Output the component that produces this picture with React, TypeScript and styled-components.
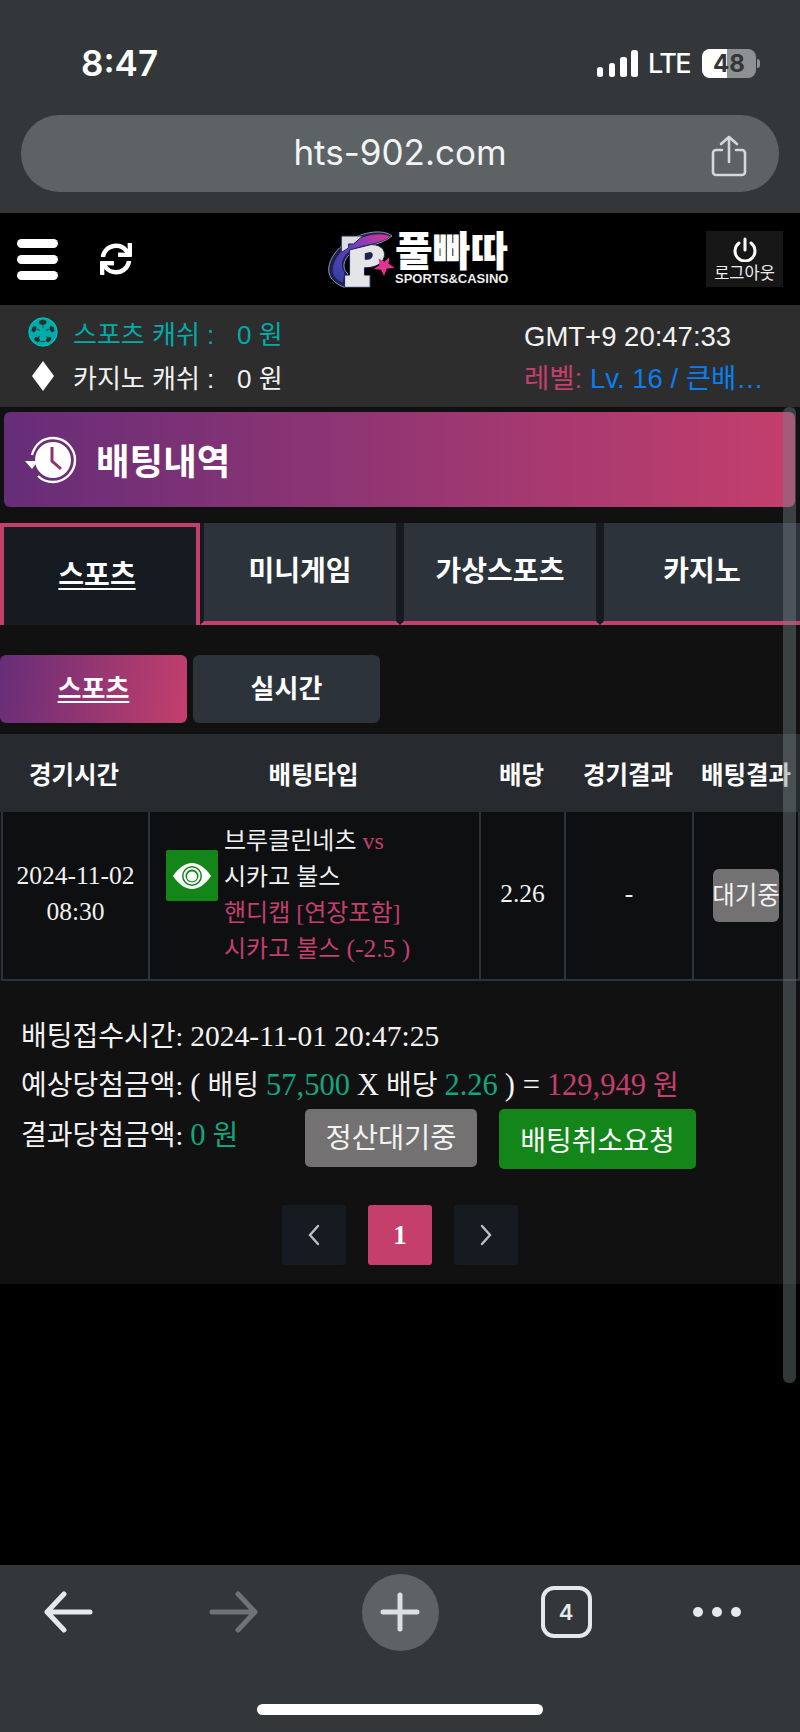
import React from 'react';
import styled, { createGlobalStyle } from 'styled-components';
import { FaSync } from 'react-icons/fa';

const SERIF = `"Liberation Serif", "Noto Sans CJK KR", serif`;
const SANS = `"Liberation Sans", "Noto Sans CJK KR", sans-serif`;
const PINK = '#c43f6c';
const GRAD = 'linear-gradient(90deg, #662d78, #c43f6c)';

const GlobalStyle = createGlobalStyle`
  html, body { margin: 0; padding: 0; background: #000; }
  * { box-sizing: border-box; }
`;

const App: React.FunctionComponent = () => (
  <Page>
    <GlobalStyle />
    <BrowserTop>
      <StatusBar>
        <Clock>8:47</Clock>
        <StatusRight>
          <svg width="41" height="27" viewBox="0 0 41 27">
            <rect x="0" y="17" width="6" height="10" rx="2.5" fill="#fff" />
            <rect x="12" y="13" width="6" height="14" rx="2.5" fill="#fff" />
            <rect x="23" y="7" width="7" height="20" rx="2.5" fill="#fff" />
            <rect x="34" y="0" width="7" height="27" rx="2.5" fill="#fff" />
          </svg>
          <Lte>LTE</Lte>
          <Battery>
            <BatteryFill />
            <BatteryNum>48</BatteryNum>
          </Battery>
          <BatteryCap />
        </StatusRight>
      </StatusBar>
      <UrlPill>
        <UrlText>hts-902.com</UrlText>
        <ShareIcon width="36" height="42" viewBox="0 0 36 42" fill="none" stroke="#d5d8db" strokeWidth="2.6" strokeLinecap="round" strokeLinejoin="round">
          <path d="M11 15H5a3 3 0 0 0-3 3v19a3 3 0 0 0 3 3h26a3 3 0 0 0 3-3V18a3 3 0 0 0-3-3h-6" />
          <path d="M18 27V2M10 9l8-7 8 7" />
        </ShareIcon>
      </UrlPill>
    </BrowserTop>

    <Header>
      <HeaderLeft>
        <Burger>
          <span />
          <span />
          <span />
        </Burger>
        <FaSync size={32} color="#fff" />
      </HeaderLeft>
      <Logo>
        <svg width="68" height="58" viewBox="85 45 205 175">
          <defs>
            <linearGradient id="swoosh" x1="0" y1="1" x2="1" y2="0">
              <stop offset="0" stopColor="#2f3f9e" />
              <stop offset="0.55" stopColor="#6a3fc0" />
              <stop offset="1" stopColor="#e0358f" />
            </linearGradient>
          </defs>
          <path d="M278 60C250 38 190 48 150 73 105 100 82 140 88 172c4 20 26 36 47 43l10-40c-18-16-16-42 8-62 30-24 90-22 125-53z" fill="#1c2350" stroke="#8b97b5" strokeWidth="3" />
          <path d="M272 62C245 48 195 56 158 80c-40 26-62 60-58 90 3 14 14 24 30 30l4-30c-14-20-8-46 16-64 32-22 88-20 122-44z" fill="url(#swoosh)" />
          <path d="M125 60h65l-28 24h-15v12l-22 14z" fill="#dcdde0" stroke="#1c2350" strokeWidth="3" />
          <path d="M150 102l65-16c36 0 48 24 36 46-10 18-34 24-56 24v22h17v37h-77v-37h15z" fill="#e4e5e7" stroke="#1c2350" strokeWidth="3" />
          <path d="M196 112l16-4c13 2 10 22-7 24h-9z" fill="#1c2350" />
          <path d="M270 124l-2 20 18 12-24 3-8 22-9-19-22-2 17-12-2-20 17 10z" fill="#e0358f" />
        </svg>
        <LogoText>
          <LogoKo>풀빠따</LogoKo>
          <LogoEn>SPORTS&amp;CASINO</LogoEn>
        </LogoText>
      </Logo>
      <LogoutBox>
        <svg width="24" height="25" viewBox="0 0 24 25" fill="none" stroke="#fff" strokeWidth="3" strokeLinecap="round">
          <path d="M12 2v11" />
          <path d="M6 6a10 10 0 1 0 12 0" />
        </svg>
        <LogoutLabel>로그아웃</LogoutLabel>
      </LogoutBox>
    </Header>

    <InfoBar>
      <InfoCol>
        <InfoRow $color="#00aba9">
          <IconSlot>
            <svg width="30" height="30" viewBox="0 0 30 30">
              <circle cx="15" cy="15" r="14.5" fill="#00aba9" />
              <g fill="#2d2d2d">
                <path d="M11 4l4-1.500 3.500 1.500-.5 3-3.500 1-3-1zM22 9l3.500 1 1 4-2.500 1.500-2.500-3zM3.500 14l1-4 3.500-1 .5 3.500-2.500 3zM7.500 20l3.500.5 1 3.500-2.500 1.500-3.500-3zM19 20.500l3.500-.5 1 2.500-3.500 3-2-1.500z" />
              </g>
              <path d="M15 8v3M9 12l3 1.500M21 12l-3 1.500M11.500 19l-1 2M18.500 19l1 2M12.500 24.500h5" stroke="#2d2d2d" strokeWidth="0.8" fill="none" />
              <circle cx="15" cy="15" r="14" fill="none" stroke="#00c4c1" strokeWidth="1" />
            </svg>
          </IconSlot>
          <InfoLabel>스포츠 캐쉬 :</InfoLabel>
          <InfoValue>0 원</InfoValue>
        </InfoRow>
        <InfoRow $color="#f2f2f2">
          <IconSlot>
            <svg width="22" height="30" viewBox="0 0 22 30">
              <path d="M11 0l11 15-11 15L0 15z" fill="#fff" />
            </svg>
          </IconSlot>
          <InfoLabel>카지노 캐쉬 :</InfoLabel>
          <InfoValue>0 원</InfoValue>
        </InfoRow>
      </InfoCol>
      <InfoRight>
        <InfoLine>GMT+9 20:47:33</InfoLine>
        <InfoLine>
          <LevelKey>레벨:</LevelKey> <LevelValue>Lv. 16 / 큰배…</LevelValue>
        </InfoLine>
      </InfoRight>
    </InfoBar>

    <Content>
      <Banner>
        <svg width="54" height="50" viewBox="0 0 54 50" fill="none">
          <path d="M7 20C10 9 18 3 28 3c12 0 22 10 22 22S40 47 28 47c-6 0-11-2-15-6" stroke="#fff" strokeWidth="2.4" />
          <circle cx="28" cy="25" r="18" fill="#fff" />
          <path d="M27 12v14l9 8" stroke="#8a3570" strokeWidth="3" />
          <path d="M0 26h13l-6 8z" fill="#fff" />
        </svg>
        <BannerTitle>배팅내역</BannerTitle>
      </Banner>

      <MainTabs>
        <MainTab $active>스포츠</MainTab>
        <MainTab>미니게임</MainTab>
        <MainTab>가상스포츠</MainTab>
        <MainTab $last>카지노</MainTab>
      </MainTabs>

      <SubTabs>
        <SubTab $active>스포츠</SubTab>
        <SubTab>실시간</SubTab>
      </SubTabs>

      <Table>
        <HeadRow>
          <HeadCell>경기시간</HeadCell>
          <HeadCell>배팅타입</HeadCell>
          <HeadCell>배당</HeadCell>
          <HeadCell>경기결과</HeadCell>
          <HeadCell>배팅결과</HeadCell>
        </HeadRow>
        <BodyRow>
          <BodyCell>
            2024-11-02
            <br />
            08:30
          </BodyCell>
          <TypeCell>
            <EyeBadge>
              <svg width="38" height="26" viewBox="0 0 38 26">
                <path d="M0 13C6 4 13 0 19 0s13 4 19 13c-6 9-13 13-19 13S6 22 0 13z" fill="#fff" />
                <circle cx="19" cy="13" r="10" fill="#148519" />
                <circle cx="19" cy="13" r="8.5" fill="#fff" />
                <circle cx="19" cy="13" r="6.5" fill="#148519" />
                <circle cx="19" cy="13.5" r="5" fill="#fff" />
              </svg>
            </EyeBadge>
            <TypeLines>
              <div>
                브루클린네츠 <Pink>vs</Pink>
              </div>
              <div>시카고 불스</div>
              <Pink as="div">핸디캡 [연장포함]</Pink>
              <Pink as="div">
                시카고 불스 <TypeNum>(-2.5 )</TypeNum>
              </Pink>
            </TypeLines>
          </TypeCell>
          <BodyCell>2.26</BodyCell>
          <BodyCell>-</BodyCell>
          <BodyCell>
            <WaitBadge>대기중</WaitBadge>
          </BodyCell>
        </BodyRow>
      </Table>

      <Summary>
        <SummaryLine>
          배팅접수시간: <Num>2024-11-01 20:47:25</Num>
        </SummaryLine>
        <SummaryLine>
          예상당첨금액: <BigNum>(</BigNum> 배팅 <Green>57,500</Green> <BigNum>X</BigNum> 배당 <Green>2.26</Green> <BigNum>) =</BigNum>{' '}
          <Pink>
            <BigNum>129,949</BigNum> 원
          </Pink>
        </SummaryLine>
        <ResultRow>
          <ResultText>
            결과당첨금액: <Green>0</Green> <GreenWon>원</GreenWon>
          </ResultText>
          <GreyButton>정산대기중</GreyButton>
          <GreenButton>배팅취소요청</GreenButton>
        </ResultRow>
      </Summary>

      <Pager>
        <PageButton>
          <svg width="14" height="22" viewBox="0 0 14 22" fill="none" stroke="#b9bec4" strokeWidth="2.4" strokeLinecap="round">
            <path d="M11 2L3 11l8 9" />
          </svg>
        </PageButton>
        <PageButton $active>1</PageButton>
        <PageButton>
          <svg width="14" height="22" viewBox="0 0 14 22" fill="none" stroke="#b9bec4" strokeWidth="2.4" strokeLinecap="round">
            <path d="M3 2l8 9-8 9" />
          </svg>
        </PageButton>
      </Pager>
    </Content>

    <Spacer />

    <BrowserBottom>
      <NavRow>
        <svg width="50" height="42" viewBox="0 0 50 42" fill="none" stroke="#e6e9eb" strokeWidth="5" strokeLinecap="round" strokeLinejoin="round">
          <path d="M47 21H4M21 3L4 21l17 18" />
        </svg>
        <svg width="50" height="42" viewBox="0 0 50 42" fill="none" stroke="#6f7375" strokeWidth="5" strokeLinecap="round" strokeLinejoin="round">
          <path d="M3 21h43M29 3l17 18-17 18" />
        </svg>
        <PlusCircle>
          <svg width="40" height="40" viewBox="0 0 40 40" stroke="#dde0e2" strokeWidth="5" strokeLinecap="round">
            <path d="M20 3v34M3 20h34" />
          </svg>
        </PlusCircle>
        <TabCount>4</TabCount>
        <Dots>
          <span />
          <span />
          <span />
        </Dots>
      </NavRow>
      <HomeBar />
    </BrowserBottom>

    <ScrollThumb />
  </Page>
);

const Page = styled.div`
  position: relative;
  width: 800px;
  height: 1732px;
  overflow: hidden;
  display: flex;
  flex-direction: column;
  background: #000;
  color: #f2f2f2;
  font-family: ${SERIF};
`;

const BrowserTop = styled.div`
  height: 213px;
  flex: none;
  background: #33373a;
  padding: 45px 21px 0;
`;
const StatusBar = styled.div`
  height: 36px;
  display: flex;
  align-items: center;
  justify-content: space-between;
  padding: 0 19px 0 60px;
`;
const Clock = styled.div`
  font-family: Inter, sans-serif;
  font-size: 35px;
  font-weight: 600;
  color: #fff;
`;
const StatusRight = styled.div`
  display: flex;
  align-items: center;
`;
const Lte = styled.div`
  margin: 0 14px 0 10px;
  width: 40px;
  font-family: Inter, sans-serif;
  font-size: 27px;
  font-weight: 500;
  letter-spacing: -1.5px;
  color: #fff;
`;
const Battery = styled.div`
  position: relative;
  width: 54px;
  height: 29px;
  border-radius: 8px;
  background: #8e9091;
  overflow: hidden;
  text-align: center;
`;
const BatteryFill = styled.div`
  position: absolute;
  left: 0;
  top: 0;
  bottom: 0;
  width: 25px;
  background: #fff;
`;
const BatteryNum = styled.div`
  position: relative;
  font-family: Inter, sans-serif;
  font-size: 24px;
  font-weight: 700;
  line-height: 29px;
  color: #33373a;
`;
const BatteryCap = styled.div`
  width: 3px;
  height: 9px;
  margin-left: 1px;
  border-radius: 0 3px 3px 0;
  background: #8e9091;
`;
const UrlPill = styled.div`
  position: relative;
  height: 77px;
  margin-top: 34px;
  border-radius: 38px;
  background: #5d6265;
  display: flex;
  align-items: center;
  justify-content: center;
`;
const UrlText = styled.div`
  margin-bottom: 3px;
  font-family: Inter, sans-serif;
  font-size: 35px;
  font-weight: 400;
  color: #f2f3f4;
`;
const ShareIcon = styled.svg`
  position: absolute;
  right: 32px;
  top: 20px;
`;

const Header = styled.div`
  height: 92px;
  flex: none;
  background: #000;
  display: grid;
  grid-template-columns: 311px auto 1fr;
  align-items: center;
  padding: 0 17px;
`;
const HeaderLeft = styled.div`
  display: flex;
  align-items: center;
  gap: 42px;
`;
const Burger = styled.div`
  display: flex;
  flex-direction: column;
  gap: 7px;
  span {
    display: block;
    width: 41px;
    height: 9px;
    border-radius: 5px;
    background: #fff;
  }
`;
const Logo = styled.div`
  display: flex;
  align-items: center;
  margin-top: 2px;
`;
const LogoText = styled.div`
  display: flex;
  flex-direction: column;
  align-items: center;
  margin-left: -1px;
`;
const LogoKo = styled.div`
  font-family: ${SANS};
  font-size: 41px;
  font-weight: 900;
  line-height: 38px;
  color: #fff;
`;
const LogoEn = styled.div`
  font-family: "Liberation Sans", sans-serif;
  font-size: 13px;
  font-weight: 700;
  line-height: 16px;
  color: #eee;
`;
const LogoutBox = styled.div`
  justify-self: end;
  width: 77px;
  height: 56px;
  background: #171717;
  display: flex;
  flex-direction: column;
  align-items: center;
  justify-content: center;
  gap: 3px;
`;
const LogoutLabel = styled.div`
  font-family: ${SANS};
  font-size: 16.5px;
  line-height: 16px;
  color: #eee;
`;

const InfoBar = styled.div`
  height: 102px;
  flex: none;
  background: #2d2d2d;
  display: flex;
  justify-content: space-between;
  padding: 9px 26px 0 28px;
  font-family: ${SANS};
  font-size: 26px;
`;
const InfoCol = styled.div`
  display: flex;
  flex-direction: column;
  gap: 8px;
`;
const InfoRow = styled.div<{ $color: string }>`
  display: flex;
  align-items: center;
  height: 36px;
  color: ${(p) => p.$color};
`;
const IconSlot = styled.div`
  width: 30px;
  margin-right: 15px;
  display: flex;
  justify-content: center;
`;
const InfoLabel = styled.div`
  width: 164px;
`;
const InfoValue = styled.div``;
const InfoRight = styled.div`
  display: flex;
  flex-direction: column;
  gap: 6px;
  width: 239px;
  margin: 5px 11px 0 0;
  font-size: 27.5px;
`;
const InfoLine = styled.div`
  height: 36px;
  line-height: 36px;
  white-space: nowrap;
`;
const LevelKey = styled.span`
  color: ${PINK};
`;
const LevelValue = styled.span`
  color: #0a7df0;
`;

const Content = styled.div`
  height: 877px;
  flex: none;
  background: #111;
  padding-top: 5px;
`;
const Banner = styled.div`
  height: 95px;
  margin: 0 5px 0 4px;
  border-radius: 6px;
  background: ${GRAD};
  display: flex;
  align-items: center;
  gap: 17px;
  padding: 0 0 0 21px;
`;
const BannerTitle = styled.div`
  font-family: ${SANS};
  font-size: 36.5px;
  font-weight: 700;
  color: #fff;
`;
const MainTabs = styled.div`
  height: 102px;
  margin-top: 16px;
  display: grid;
  grid-template-columns: repeat(4, 200px);
  background: #161b22;
`;
const MainTab = styled.div<{ $active?: boolean; $last?: boolean }>`
  font-family: ${SANS};
  font-size: 28px;
  font-weight: 700;
  color: #fff;
  display: flex;
  justify-content: center;
  align-items: center;
  ${(p) =>
    p.$active
      ? `
    background: #161b22;
    border: 4px solid ${PINK};
    border-bottom: 0;
    text-decoration: underline;
    text-underline-offset: 3px;
    padding: 0 6px 6px 0;
  `
      : `
    background: #2c333b;
    border-style: solid;
    border-color: #161b22;
    border-width: 0 ${p.$last ? 0 : 4}px 4px 4px;
    border-bottom-color: ${PINK};
    padding-bottom: 6px;
  `}
`;
const SubTabs = styled.div`
  display: flex;
  gap: 6px;
  margin-top: 30px;
`;
const SubTab = styled.div<{ $active?: boolean }>`
  width: 187px;
  height: 68px;
  border-radius: 6px;
  background: ${(p) => (p.$active ? 'linear-gradient(100deg, #662d78, #c43f6c)' : '#2c333b')};
  font-family: ${SANS};
  font-size: 26px;
  font-weight: 700;
  color: #fff;
  text-decoration: ${(p) => (p.$active ? 'underline' : 'none')};
  text-underline-offset: 3px;
  display: flex;
  align-items: center;
  justify-content: center;
  padding-bottom: 6px;
`;

const Table = styled.div`
  margin-top: 11px;
`;
const HeadRow = styled.div`
  height: 78px;
  background: #272b30;
  display: grid;
  grid-template-columns: 148px 331px 85px 128px 108px;
`;
const HeadCell = styled.div`
  font-family: ${SANS};
  font-size: 24.5px;
  font-weight: 700;
  color: #fff;
  display: flex;
  align-items: center;
  justify-content: center;
  white-space: nowrap;
`;
const BodyRow = styled.div`
  height: 169px;
  width: 799px;
  margin-left: 1px;
  background: #0e0f11;
  border-bottom: 2px solid #2c333b;
  border-right: 2px solid #2c333b;
  display: grid;
  grid-template-columns: 147px 331px 85px 128px 1fr;
`;
const BodyCell = styled.div`
  border-left: 2px solid #2c333b;
  display: flex;
  align-items: center;
  justify-content: center;
  text-align: center;
  font-size: 25.5px;
  line-height: 36px;
  color: #f2f2f2;
  padding-bottom: 4px;
`;
const TypeCell = styled.div`
  border-left: 2px solid #2c333b;
  display: flex;
  align-items: center;
  padding-left: 16px;
`;
const EyeBadge = styled.div`
  width: 52px;
  height: 51px;
  margin: 38px 6px 0 0;
  border-radius: 2px;
  background: #148519;
  display: flex;
  align-items: center;
  justify-content: center;
  align-self: flex-start;
`;
const TypeLines = styled.div`
  margin-bottom: 1px;
  font-size: 24px;
  line-height: 36px;
  color: #f2f2f2;
`;
const TypeNum = styled.span`
  font-size: 25.5px;
`;
const Pink = styled.span`
  color: ${PINK};
`;
const Num = styled.span`
  font-size: 29.5px;
`;
const BigNum = styled.span`
  font-size: 30.5px;
`;
const Green = styled(BigNum)`
  color: #14a57e;
`;
const GreenWon = styled.span`
  color: #14a57e;
`;
const WaitBadge = styled.div`
  position: relative;
  top: 2px;
  width: 66px;
  height: 53px;
  border-radius: 6px;
  background: #737171;
  font-family: ${SANS};
  font-size: 24.5px;
  display: flex;
  align-items: center;
  justify-content: center;
  white-space: nowrap;
`;

const Summary = styled.div`
  padding: 31px 0 0 21px;
  font-size: 28px;
  color: #f2f2f2;
`;
const SummaryLine = styled.div`
  height: 49px;
  line-height: 49px;
  white-space: nowrap;
`;
const ResultRow = styled.div`
  display: flex;
  align-items: flex-start;
  height: 60px;
  margin-top: -1px;
`;
const ResultText = styled.div`
  width: 284px;
  padding-top: 2px;
  line-height: 49px;
  white-space: nowrap;
`;
const GreyButton = styled.div`
  width: 172px;
  height: 58px;
  border-radius: 5px;
  background: #737171;
  font-family: ${SANS};
  font-size: 28.5px;
  display: flex;
  align-items: center;
  justify-content: center;
  padding-bottom: 6px;
`;
const GreenButton = styled(GreyButton)`
  width: 197px;
  height: 60px;
  margin-left: 22px;
  background: #148519;
  color: #fff;
  font-size: 28px;
  padding-bottom: 0;
`;
const Pager = styled.div`
  display: flex;
  justify-content: center;
  gap: 22px;
  margin-top: 36px;
`;
const PageButton = styled.div<{ $active?: boolean }>`
  width: 64px;
  height: 60px;
  border-radius: 3px;
  background: ${(p) => (p.$active ? PINK : '#161b22')};
  font-size: 27px;
  font-weight: 700;
  color: #fff;
  display: flex;
  align-items: center;
  justify-content: center;
`;

const Spacer = styled.div`
  flex: 1;
`;

const BrowserBottom = styled.div`
  height: 167px;
  flex: none;
  background: #33373a;
  display: flex;
  flex-direction: column;
  align-items: center;
  overflow: hidden;
`;
const NavRow = styled.div`
  width: 830px;
  height: 94px;
  flex: none;
  display: grid;
  grid-template-columns: repeat(5, 166px);
  align-items: center;
  justify-items: center;
`;
const PlusCircle = styled.div`
  width: 77px;
  height: 77px;
  border-radius: 50%;
  background: #5d6265;
  display: flex;
  align-items: center;
  justify-content: center;
`;
const TabCount = styled.div`
  width: 51px;
  height: 52px;
  border: 4px solid #e6e9eb;
  border-radius: 13px;
  font-family: Inter, sans-serif;
  font-size: 22px;
  font-weight: 600;
  color: #e6e9eb;
  display: flex;
  align-items: center;
  justify-content: center;
`;
const Dots = styled.div`
  display: flex;
  gap: 9px;
  margin-right: 30px;
  span {
    width: 10px;
    height: 10px;
    border-radius: 50%;
    background: #e6e9eb;
  }
`;
const HomeBar = styled.div`
  width: 286px;
  height: 11px;
  margin-top: 45px;
  flex: none;
  border-radius: 6px;
  background: #fff;
`;

const ScrollThumb = styled.div`
  position: absolute;
  left: 783px;
  top: 407px;
  width: 13px;
  height: 976px;
  border-radius: 6px;
  background: rgba(120, 130, 135, 0.42);
`;

export default App;
